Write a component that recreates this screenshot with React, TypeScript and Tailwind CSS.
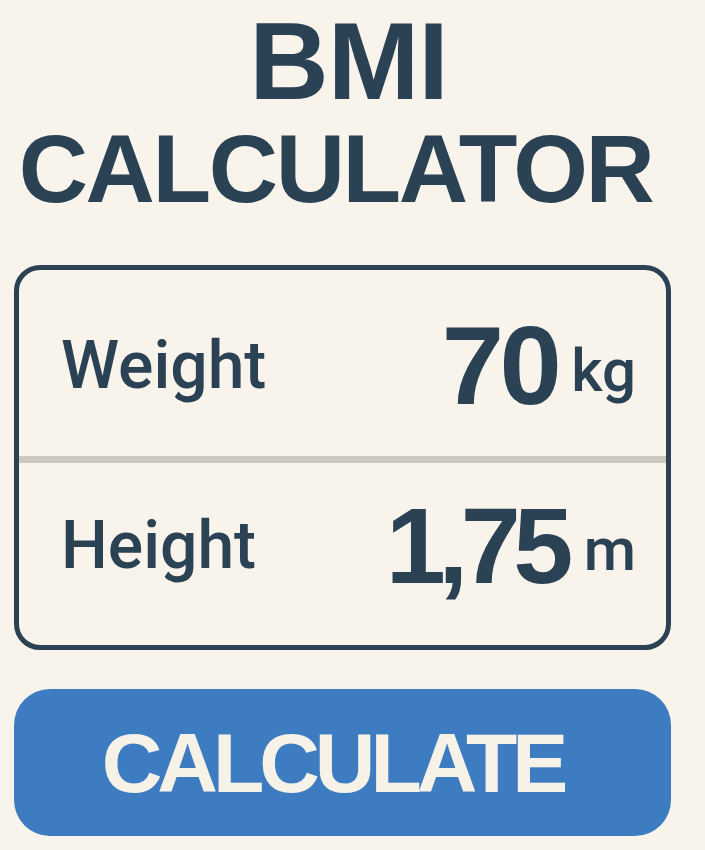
export default function App() {
  return (
    <main className="min-h-screen w-full bg-[#f8f4ec] font-['Liberation_Sans',Arial,sans-serif] text-[#2b4255]">
      <div className="ml-[14px] flex w-[657px] flex-col">
        <h1 className="flex flex-col items-center pt-[6px] font-bold">
          <span className="pl-[12px] text-[110px] leading-none tracking-[-0.01em]">BMI</span>
          <span className="mt-[5px] pr-[14px] text-[96px] leading-none tracking-[-0.025em]">
            CALCULATOR
          </span>
        </h1>

        <section className="mt-[48px] flex h-[385px] flex-col rounded-[26px] border-[5px] border-[#2b4255]">
          <div className="flex h-[186px] items-center justify-between pl-[42px] pr-[30px] pt-[5px]">
            <span className="font-['Roboto',sans-serif] text-[66px] font-medium leading-none">
              Weight
            </span>
            <div className="flex items-end gap-[14px]">
              <span className="text-[112px] font-bold leading-none tracking-[-0.04em]">70</span>
              <span className="pb-[21px] font-['Roboto',sans-serif] text-[60px] font-medium leading-none">
                kg
              </span>
            </div>
          </div>
          <div className="h-[7px] bg-[#cbc8bf]" />
          <div className="flex h-[182px] items-center justify-between pb-[17px] pl-[42px] pr-[30px]">
            <span className="font-['Roboto',sans-serif] text-[66px] font-medium leading-none">
              Height
            </span>
            <div className="flex items-end gap-[18px]">
              <span className="text-[108px] font-bold leading-none tracking-[-0.07em]">1,75</span>
              <span className="pb-[20px] font-['Roboto',sans-serif] text-[60px] font-medium leading-none">
                m
              </span>
            </div>
          </div>
        </section>

        <button className="mt-[39px] flex h-[147px] items-center justify-center rounded-[36px] bg-[#3d7cc0] pr-[20px] text-[84px] font-bold leading-none tracking-[-0.06em] text-[#f7f2e8]">
          CALCULATE
        </button>
      </div>
    </main>
  );
}
